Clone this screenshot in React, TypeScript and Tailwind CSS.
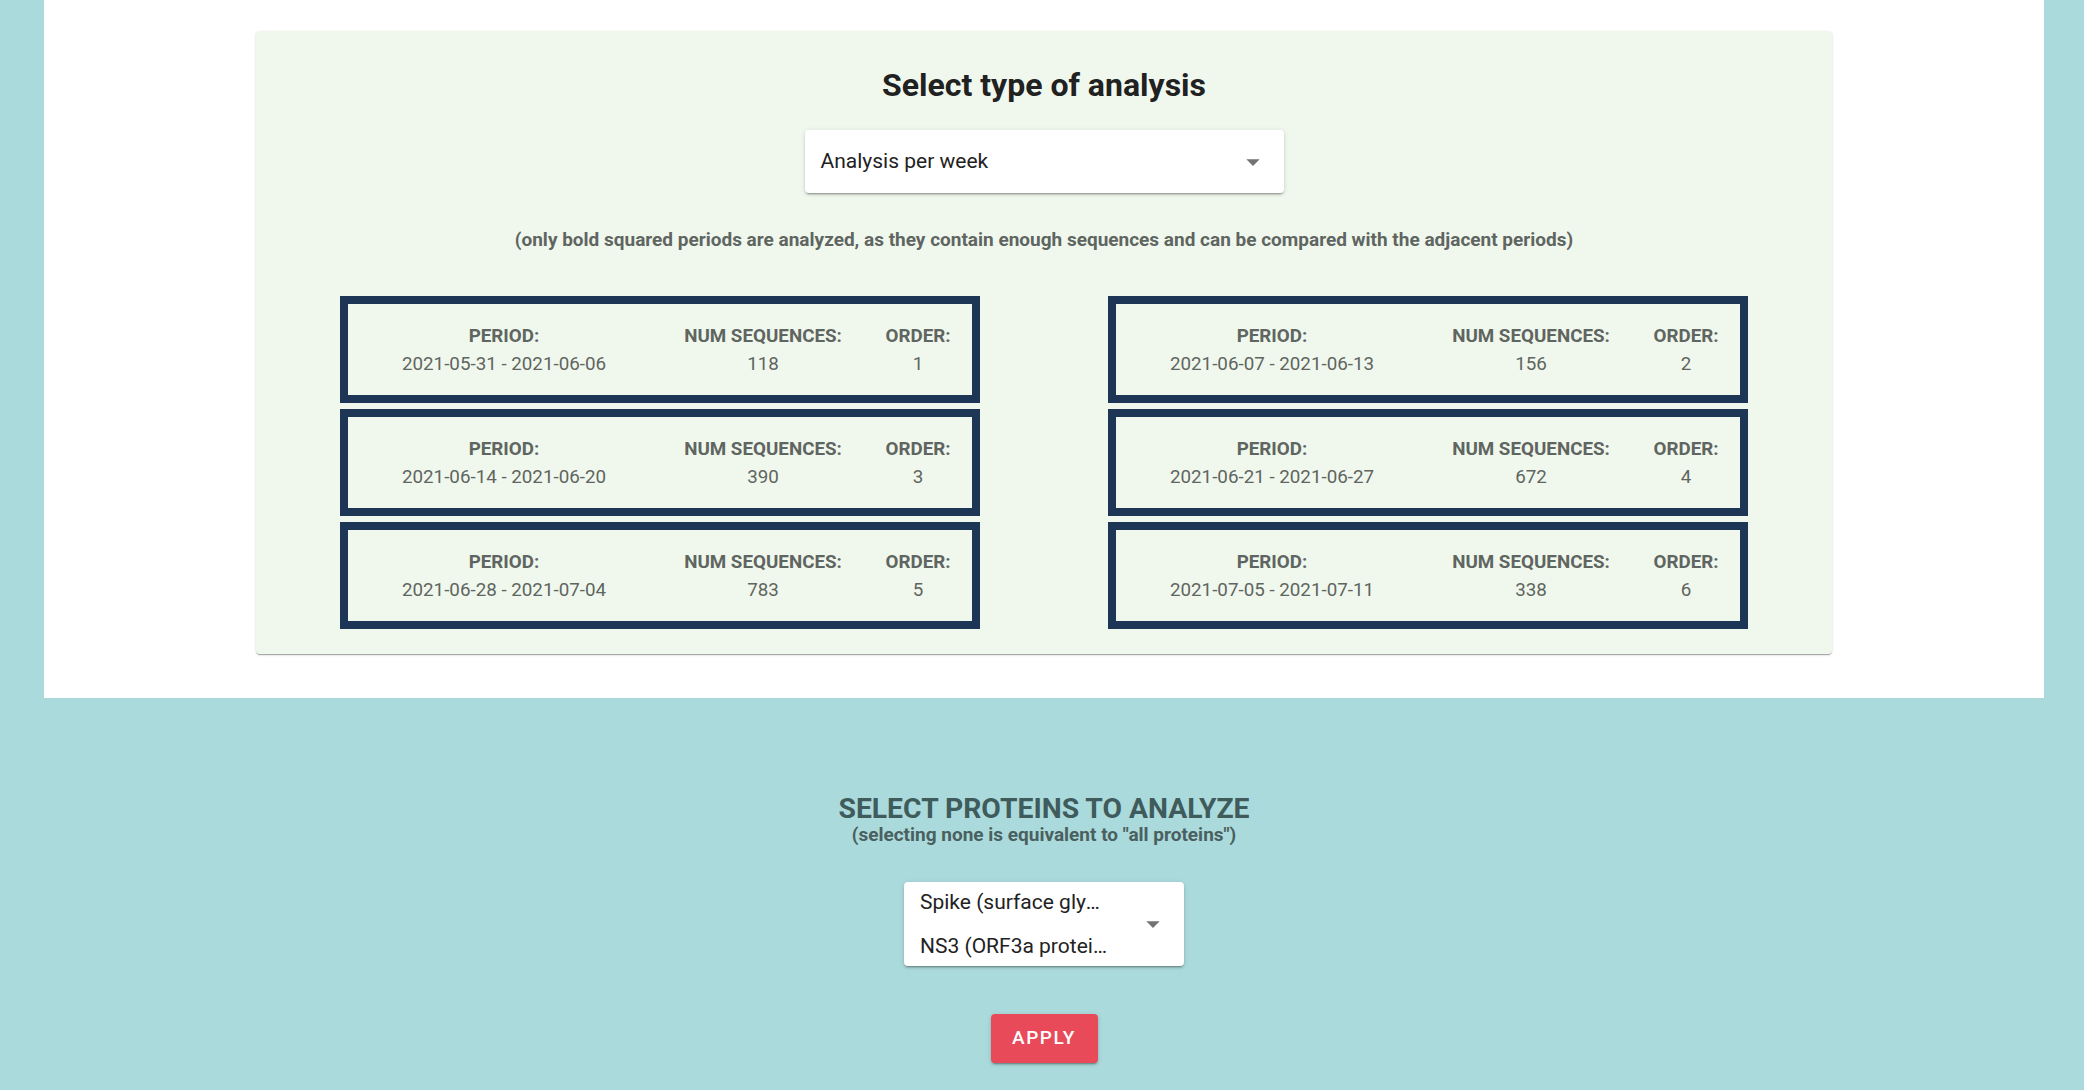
import { ReactNode } from 'react';

type Period = { range: string; count: number; order: number };

const periods: Period[] = [
  { range: '2021-05-31 - 2021-06-06', count: 118, order: 1 },
  { range: '2021-06-07 - 2021-06-13', count: 156, order: 2 },
  { range: '2021-06-14 - 2021-06-20', count: 390, order: 3 },
  { range: '2021-06-21 - 2021-06-27', count: 672, order: 4 },
  { range: '2021-06-28 - 2021-07-04', count: 783, order: 5 },
  { range: '2021-07-05 - 2021-07-11', count: 338, order: 6 },
];

function DropArrow() {
  return (
    <svg viewBox="0 0 24 24" className="w-8 h-8 shrink-0 fill-black/55">
      <path d="M7 10l5 5 5-5z" />
    </svg>
  );
}

function Cell({ label, value, width }: { label: string; value: ReactNode; width: string }) {
  return (
    <div className={`${width} flex flex-col items-center text-[18.8px] leading-[28px] text-[#5f6560]`}>
      <span className="font-bold">{label}</span>
      <span>{value}</span>
    </div>
  );
}

function PeriodBox({ p }: { p: Period }) {
  return (
    <div className="w-[640px] h-[107px] border-8 border-[#1e3655] flex items-center">
      <Cell label="PERIOD:" value={p.range} width="w-[312px]" />
      <Cell label="NUM SEQUENCES:" value={p.count} width="w-[206px]" />
      <Cell label="ORDER:" value={p.order} width="w-[104px]" />
    </div>
  );
}

export default function App() {
  return (
    <div className="min-h-screen bg-[#abdadc] font-['Roboto',sans-serif]">
      <div className="ml-[44px] mr-[40px] bg-white pt-[31px] pb-[44px]">
        <div className="mx-auto w-[1576px] bg-[#f0f8ee] rounded shadow-[0px_2px_1px_-1px_rgba(0,0,0,0.2),0px_1px_1px_0px_rgba(0,0,0,0.14),0px_1px_3px_0px_rgba(0,0,0,0.12)] pt-[35px] pb-[25px] flex flex-col items-center">
          <h2 className="text-[32px] leading-[38px] font-bold text-[#212121]">Select type of analysis</h2>

          <div className="mt-[26px] w-[479px] h-[63px] bg-white rounded flex items-center justify-between pl-[16px] pr-[15px] shadow-[0px_3px_1px_-2px_rgba(0,0,0,0.2),0px_2px_2px_0px_rgba(0,0,0,0.14),0px_1px_5px_0px_rgba(0,0,0,0.12)]">
            <span className="text-[21px] text-[#222]">Analysis per week</span>
            <DropArrow />
          </div>

          <p className="mt-[35px] text-[19px] leading-[24px] font-bold text-[#5f6560]">
            (only bold squared periods are analyzed, as they contain enough sequences and can be compared with the adjacent periods)
          </p>

          <div className="mt-[44px] grid grid-cols-[640px_640px] gap-x-[128px] gap-y-[6px]">
            {periods.map((p) => (
              <PeriodBox key={p.order} p={p} />
            ))}
          </div>
        </div>
      </div>

      <div className="ml-[44px] mr-[40px] flex flex-col items-center pt-[95px]">
        <h3 className="text-[28.3px] leading-[32px] font-bold text-[#3f5b5b]">SELECT PROTEINS TO ANALYZE</h3>
        <p className="text-[19px] leading-[20px] font-bold text-[#4a605f]">
          (selecting none is equivalent to "all proteins")
        </p>

        <div className="mt-[37px] w-[280px] h-[84px] bg-white rounded flex items-center justify-between pl-[16px] pr-[15px] shadow-[0px_3px_1px_-2px_rgba(0,0,0,0.2),0px_2px_2px_0px_rgba(0,0,0,0.14),0px_1px_5px_0px_rgba(0,0,0,0.12)]">
          <div className="flex flex-col text-[21px] leading-[44px] text-[#222] w-[190px]">
            <span className="truncate">Spike (surface glycoprotein)</span>
            <span className="truncate">NS3 (ORF3a protein)</span>
          </div>
          <DropArrow />
        </div>

        <button className="mt-[48px] w-[107px] h-[49px] rounded bg-[#e84a5a] text-white text-[19px] font-medium tracking-[0.08em] shadow-[0px_3px_1px_-2px_rgba(0,0,0,0.2),0px_2px_2px_0px_rgba(0,0,0,0.14),0px_1px_5px_0px_rgba(0,0,0,0.12)]">
          APPLY
        </button>
      </div>
    </div>
  );
}
